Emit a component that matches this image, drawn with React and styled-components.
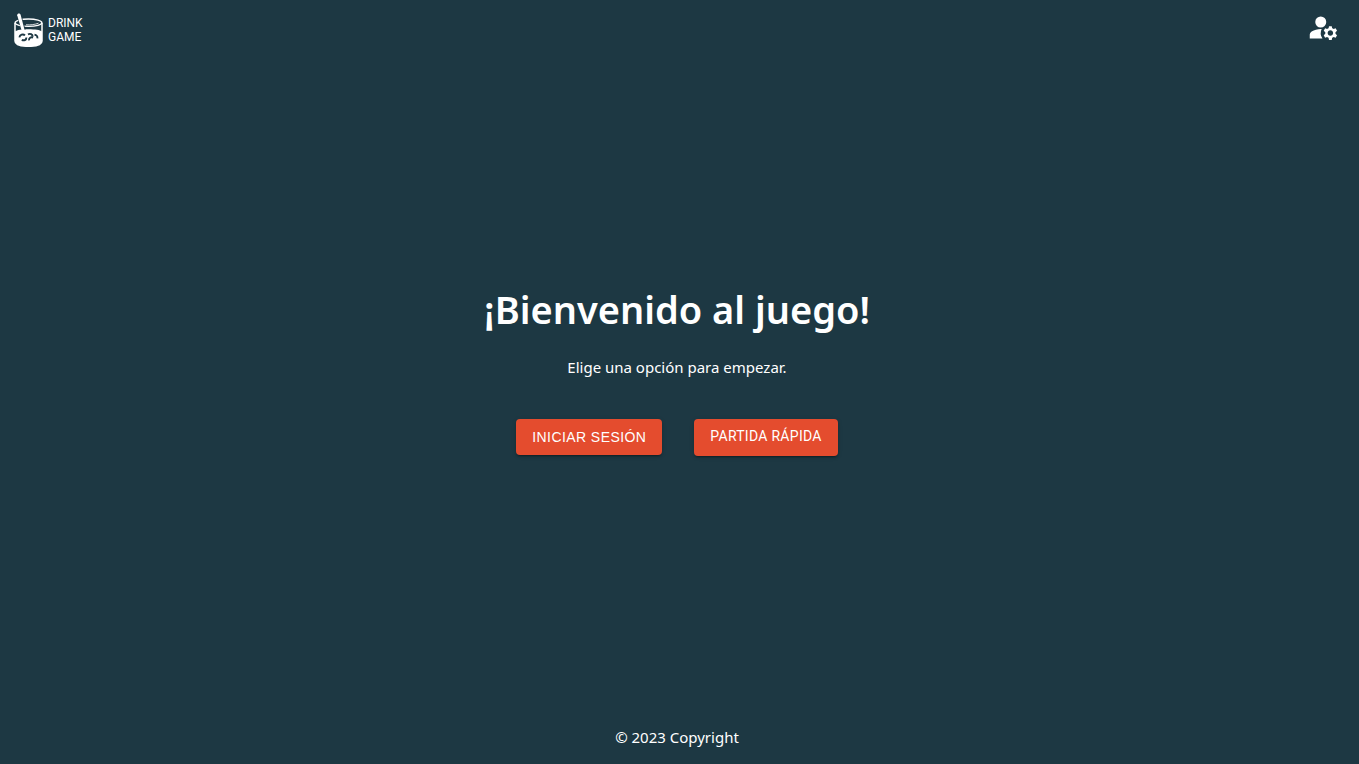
import React from "react";
import styled, { createGlobalStyle } from "styled-components";
import { MdManageAccounts } from "react-icons/md";

const GlobalStyle = createGlobalStyle`
  *, *::before, *::after { box-sizing: border-box; }
  body {
    margin: 0;
    background: #1d3843;
    color: #fff;
    font-family: "Segoe UI", "Noto Sans", "Open Sans", sans-serif;
    font-size: 15px;
    line-height: 24px;
  }
`;

const Page = styled.div`
  display: flex;
  flex-direction: column;
  min-height: 100vh;
  padding-right: 5px;
`;

const Header = styled.header`
  display: flex;
  align-items: center;
  justify-content: space-between;
  height: 60px;
  padding: 0 14px 6px;
`;

const Brand = styled.a`
  display: flex;
  align-items: center;
  gap: 5px;
  padding-top: 6px;
  color: inherit;
  text-decoration: none;
`;

const BrandName = styled.span`
  display: flex;
  flex-direction: column;
  font: 400 12px/14px Roboto, sans-serif;
`;

const IconButton = styled.button`
  display: flex;
  padding: 0;
  border: 0;
  background: none;
  color: inherit;
  cursor: pointer;
`;

const Main = styled.main`
  flex: 1;
  display: flex;
  flex-direction: column;
  align-items: center;
  justify-content: center;
  padding-bottom: 32px;
`;

const Title = styled.h1`
  margin: 0 0 22px;
  font-size: 38px;
  font-weight: 600;
  line-height: 48px;
`;

const Lead = styled.p`
  margin: 0;
`;

const Actions = styled.div`
  display: flex;
  align-items: flex-start;
  gap: 32px;
  margin-top: 40px;
`;

const Button = styled.button`
  height: 36px;
  padding: 0 16px;
  border: 0;
  border-radius: 4px;
  background: #e44c2e;
  color: #fff;
  font: 500 14px/24px "Liberation Sans", Arial, sans-serif;
  letter-spacing: 0.03em;
  text-transform: uppercase;
  box-shadow: 0 3px 1px -2px rgba(0, 0, 0, 0.2), 0 2px 2px rgba(0, 0, 0, 0.14), 0 1px 5px rgba(0, 0, 0, 0.12);
  cursor: pointer;
`;

const LinkButton = styled(Button).attrs({ as: "a" })`
  height: 37px;
  padding: 5px 16px 8px;
  font-family: Roboto, sans-serif;
  font-weight: 400;
  letter-spacing: 0.02em;
  text-decoration: none;
`;

const Footer = styled.footer`
  padding: 13px 0 15px;
  text-align: center;
`;

function Glass() {
  return (
    <svg width="29" height="34" viewBox="0 0 29 34" fill="none" aria-hidden="true">
      <path d="M1 10V28c0 3.500 5 5.300 13.500 5.300S28 31.500 28 28V10" stroke="#fff" strokeWidth="1.500" />
      <ellipse cx="14.500" cy="9.700" rx="13.400" ry="3.700" stroke="#fff" strokeWidth="1.400" />
      <path d="M12 11.800c5 .3 9-.3 12.500-1.600" stroke="#fff" strokeWidth="0.800" />
      <path d="M1 18.500c2-1.500 7-2.200 13.500-2.200s11.500.7 13.500 2.200V28c0 3.500-5 5.300-13.500 5.300S1 31.500 1 28Z" fill="#fff" />
      <path d="M2.600 2C2.600-.2 6.500-.4 7.200 1.800L11.500 16.400H7.200Z" fill="#1d3843" />
      <path d="M3.200 2.200C3.100.3 6 0 6.600 1.800L11 18.500H7.900Z" fill="#fff" />
      <g stroke="#1d3843" strokeWidth="1.900">
        <path d="M5.400 24.400c.4-2.700 3.600-3.800 5.600-2" />
        <path d="M7.800 26.800c2.200 1.200 4.600.2 4.600-2.400" />
        <path d="M14 21.300c2.200-1.100 4.600 0 4.700 2.300" />
        <path d="M15 27.400c-.2-2.300 1.800-3.700 4.100-2.900" />
        <path d="M20.500 21.700c1.900.1 3.200 1.500 2.900 3.600" />
      </g>
    </svg>
  );
}

export default function App() {
  return (
    <>
      <GlobalStyle />
      <Page>
        <Header>
          <Brand href="#">
            <Glass />
            <BrandName>
              <span>DRINK</span>
              <span>GAME</span>
            </BrandName>
          </Brand>
          <IconButton type="button" aria-label="Cuenta">
            <MdManageAccounts size={33} />
          </IconButton>
        </Header>
        <Main>
          <Title>¡Bienvenido al juego!</Title>
          <Lead>Elige una opción para empezar.</Lead>
          <Actions>
            <Button type="button">Iniciar sesión</Button>
            <LinkButton href="#">Partida rápida</LinkButton>
          </Actions>
        </Main>
        <Footer>© 2023 Copyright</Footer>
      </Page>
    </>
  );
}
